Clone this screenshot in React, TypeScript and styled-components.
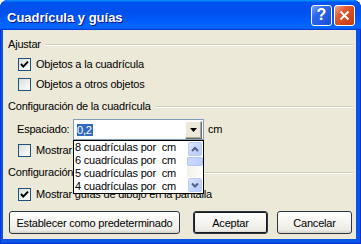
import React from "react";
import styled, { createGlobalStyle } from "styled-components";

const GlobalStyle = createGlobalStyle`
  html, body {
    margin: 0;
    padding: 0;
    background: #ffffff;
  }
  body {
    font-family: "Liberation Sans", Arial, sans-serif;
    font-size: 11px;
    color: #000;
  }
  * { box-sizing: border-box; }
`;

const Window = styled.div`
  width: 361px;
  height: 244px;
  display: flex;
  flex-direction: column;
  background: #0a55e6;
  border-radius: 8px 8px 0 0;
  box-shadow: inset 0 0 0 1px #0831d9;
  overflow: hidden;
`;

const TitleBar = styled.div`
  height: 30px;
  flex: none;
  display: flex;
  align-items: center;
  padding: 0 6px 0 7px;
  background: linear-gradient(
    180deg,
    #0997ff,
    #0053ee 8%,
    #0050ee 40%,
    #0066ff 88%,
    #0066ff 93%,
    #005bff 95%,
    #003dd7 96%,
    #003dd7
  );
`;

const TitleText = styled.div`
  flex: 1;
  padding-top: 4px;
  color: #fff;
  font-weight: bold;
  font-size: 13px;
  line-height: 15px;
  text-shadow: 1px 1px #0f1089;
  white-space: nowrap;
`;

const CaptionButton = styled.div<{ $kind: "help" | "close" }>`
  width: 21px;
  height: 21px;
  margin-left: 2px;
  border: 1px solid #fff;
  border-radius: 3px;
  display: flex;
  align-items: center;
  justify-content: center;
  color: #fff;
  font-weight: bold;
  font-size: 16px;
  line-height: 1;
  background: ${(p) =>
    p.$kind === "close"
      ? "linear-gradient(135deg, #f3a58f 0%, #e2582f 35%, #d2461c 70%, #c23a12 100%)"
      : "linear-gradient(135deg, #7aa2f7 0%, #2d67e8 35%, #2258df 70%, #1a4ccf 100%)"};
`;

const Body = styled.div`
  flex: 1;
  margin: 0 5px 5px 3px;
  background: #ece9d8;
  padding: 8px 3px 0 5px;
  display: flex;
  flex-direction: column;
`;

const GroupHeader = styled.div<{ $top?: number }>`
  display: flex;
  align-items: center;
  height: 13px;
  line-height: 13px;
  margin-top: ${(p) => p.$top ?? 0}px;
  letter-spacing: -0.2px;
  white-space: nowrap;
`;

const GroupRule = styled.div`
  flex: 1;
  margin-left: 4px;
  height: 2px;
  border-top: 1px solid #d0d0bf;
  border-bottom: 1px solid #ffffff;
`;

const CheckRow = styled.div<{ $top: number }>`
  display: flex;
  align-items: center;
  height: 13px;
  line-height: 13px;
  margin-top: ${(p) => p.$top}px;
  padding-left: 10px;
  letter-spacing: -0.2px;
  white-space: nowrap;
`;

const Box = styled.span`
  width: 13px;
  height: 13px;
  flex: none;
  margin-right: 5px;
  border: 1px solid #1c5180;
  background: linear-gradient(135deg, #dcdcd7, #ffffff);
  display: flex;
  align-items: center;
  justify-content: center;
`;

const FieldRow = styled.div<{ $top: number }>`
  display: flex;
  align-items: center;
  height: 21px;
  margin-top: ${(p) => p.$top}px;
  padding-left: 9px;
  letter-spacing: -0.2px;
  white-space: nowrap;
`;

const FieldLabel = styled.span`
  width: 56px;
  line-height: 13px;
`;

const ComboWrap = styled.div`
  position: relative;
  width: 131px;
  height: 21px;
`;

const Combo = styled.div`
  width: 100%;
  height: 100%;
  display: flex;
  align-items: center;
  border: 1px solid #7f9db9;
  background: #fff;
`;

const ComboValue = styled.div`
  flex: 1;
  padding-left: 3px;
  display: flex;
  align-items: center;
`;

const Selected = styled.span`
  background: #316ac5;
  color: #fff;
  line-height: 12px;
  padding: 0 1px 0 0;
`;

const DropButton = styled.div`
  width: 17px;
  height: 18px;
  margin-right: 1px;
  display: flex;
  align-items: center;
  justify-content: center;
  background: #ece9d8;
  border: 1px solid;
  border-color: #ffffff #716f64 #716f64 #ffffff;
  box-shadow: inset -1px -1px #aca899;
`;

const Unit = styled.span`
  margin-left: 4px;
  line-height: 13px;
`;

const DropList = styled.div`
  position: absolute;
  top: 21px;
  left: 0;
  width: 131px;
  height: 54px;
  z-index: 10;
  border: 1px solid #000;
  background: #fff;
  display: flex;
`;

const Items = styled.div`
  flex: 1;
  display: flex;
  flex-direction: column;
`;

const Item = styled.div`
  height: 13px;
  line-height: 13px;
  padding-left: 1px;
  white-space: pre;
  letter-spacing: -0.2px;
`;

const ScrollTrack = styled.div`
  width: 16px;
  display: flex;
  flex-direction: column;
  background: linear-gradient(90deg, #f3f1ec, #fefefb);
`;

const ScrollButton = styled.div`
  width: 16px;
  height: 16px;
  border: 1px solid #ffffff;
  border-radius: 3px;
  background: linear-gradient(135deg, #e3ebfe 0%, #c6d6fb 50%, #b4c8f6 100%);
  box-shadow: inset 0 0 0 1px #b7cbf6;
  display: flex;
  align-items: center;
  justify-content: center;
`;

const Thumb = styled.div`
  height: 9px;
  margin: 0 0 0 0;
  border: 1px solid #b2c6f4;
  border-radius: 2px;
  background: linear-gradient(90deg, #cad9fd, #bccdf8);
`;

const TrackFill = styled.div`
  flex: 1;
`;

const ButtonRow = styled.div`
  display: flex;
  margin-top: 10px;
  padding-left: 1px;
`;

const PushButton = styled.div<{ $width: number; $gap?: number; $default?: boolean }>`
  width: ${(p) => p.$width}px;
  height: 23px;
  margin-left: ${(p) => p.$gap ?? 0}px;
  display: flex;
  align-items: center;
  justify-content: center;
  border: 1px solid #2c3540;
  border-radius: 3px;
  background: linear-gradient(180deg, #ffffff, #f3f2ed 60%, #ecebe6 86%, #d6d0c5);
  box-shadow: ${(p) => (p.$default ? "inset 0 0 0 1px #1a1a1a" : "none")};
  letter-spacing: -0.2px;
  white-space: nowrap;
`;

const CheckMark = () => (
  <svg width="9" height="9" viewBox="0 0 9 9">
    <polyline points="1,4 3.3,6.6 8,1.6" fill="none" stroke="#000" strokeWidth="2" />
  </svg>
);

const Checkbox = ({ checked }: { checked?: boolean }) => <Box>{checked && <CheckMark />}</Box>;

const Chevron = ({ up }: { up?: boolean }) => (
  <svg width="8" height="6" viewBox="0 0 8 6">
    <polyline
      points={up ? "1,5 4,2 7,5" : "1,1.5 4,4.5 7,1.5"}
      fill="none"
      stroke="#4d6185"
      strokeWidth="2"
    />
  </svg>
);

const spacings = [
  "8 cuadrículas por  cm",
  "6 cuadrículas por  cm",
  "5 cuadrículas por  cm",
  "4 cuadrículas por  cm",
];

export default function App() {
  return (
    <>
      <GlobalStyle />
      <Window>
        <TitleBar>
          <TitleText>Cuadrícula y guías</TitleText>
          <CaptionButton $kind="help">?</CaptionButton>
          <CaptionButton $kind="close">
            <svg width="11" height="11" viewBox="0 0 11 11">
              <path d="M1.5 1.5 L9.5 9.5 M9.5 1.5 L1.5 9.5" stroke="#fff" strokeWidth="2" />
            </svg>
          </CaptionButton>
        </TitleBar>
        <Body>
          <GroupHeader>
            Ajustar
            <GroupRule />
          </GroupHeader>
          <CheckRow $top={7}>
            <Checkbox checked />
            Objetos a la cuadrícula
          </CheckRow>
          <CheckRow $top={7}>
            <Checkbox />
            Objetos a otros objetos
          </CheckRow>

          <GroupHeader $top={9}>
            Configuración de la cuadrícula
            <GroupRule />
          </GroupHeader>
          <FieldRow $top={6}>
            <FieldLabel>Espaciado:</FieldLabel>
            <ComboWrap>
              <Combo>
                <ComboValue>
                  <Selected>0,2</Selected>
                </ComboValue>
                <DropButton>
                  <svg width="7" height="4" viewBox="0 0 7 4">
                    <path d="M0 0 H7 L3.5 4 Z" fill="#000" />
                  </svg>
                </DropButton>
              </Combo>
              <DropList>
                <Items>
                  {spacings.map((s) => (
                    <Item key={s}>{s}</Item>
                  ))}
                </Items>
                <ScrollTrack>
                  <ScrollButton>
                    <Chevron up />
                  </ScrollButton>
                  <Thumb />
                  <TrackFill />
                  <ScrollButton>
                    <Chevron />
                  </ScrollButton>
                </ScrollTrack>
              </DropList>
            </ComboWrap>
            <Unit>cm</Unit>
          </FieldRow>
          <CheckRow $top={4}>
            <Checkbox />
            Mostrar cuadrícula en la pantalla
          </CheckRow>

          <GroupHeader $top={9}>
            Configuración de las guías
            <GroupRule />
          </GroupHeader>
          <CheckRow $top={9}>
            <Checkbox checked />
            Mostrar guías de dibujo en la pantalla
          </CheckRow>

          <ButtonRow>
            <PushButton $width={171}>Establecer como predeterminado</PushButton>
            <PushButton $width={75} $gap={13} $default>
              Aceptar
            </PushButton>
            <PushButton $width={75} $gap={9}>
              Cancelar
            </PushButton>
          </ButtonRow>
        </Body>
      </Window>
    </>
  );
}
